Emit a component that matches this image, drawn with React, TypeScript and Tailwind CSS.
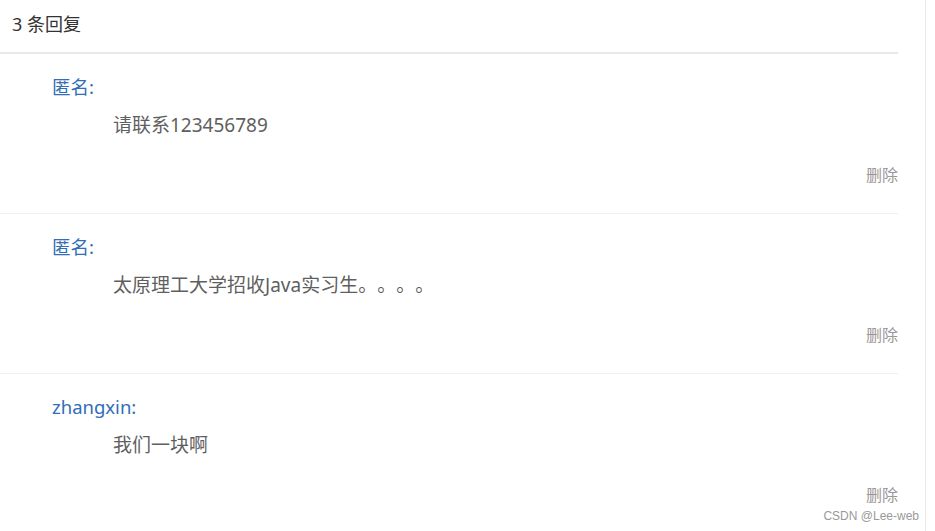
const replies = [
  { name: "匿名:", content: "请联系123456789" },
  { name: "匿名:", content: "太原理工大学招收Java实习生。。。。" },
  { name: "zhangxin:", content: "我们一块啊" },
];

export default function App() {
  return (
    <div
      className="relative h-[531px] w-[935px] overflow-hidden bg-white [text-spacing-trim:space-all]"
      style={{ fontFamily: '"Noto Sans", "Noto Sans CJK SC", sans-serif' }}
    >
      <div className="h-full w-[926px] border-r border-[#e8e8e8]">
        <div className="mr-[27px] border-b-2 border-[#e9e9e9] pb-[16px] pl-[12px] pt-[12px] text-[18px] leading-[24px] text-[#333]">
          3 条回复
        </div>
        {replies.map((reply, i) => (
          <div
            key={i}
            className="mr-[27px] flex flex-col border-b border-[#f0f0f0] pb-[26px] pt-[21px]"
          >
            <div className="pl-[52px] text-[18.5px] leading-[24px] text-[#2f6eb8]">
              {reply.name}
            </div>
            <div className="mt-[14px] pl-[113px] text-[19px] leading-[24px] text-[#5f5f5f]">
              {reply.content}
            </div>
            <div className="mt-[26px] self-end text-[16px] leading-[24px] text-[#999]">
              删除
            </div>
          </div>
        ))}
      </div>
      <div
        className="absolute bottom-[8px] right-[16px] text-[12px] leading-[14px] text-[#999]"
        style={{ fontFamily: '"Liberation Sans", Arial, sans-serif' }}
      >
        CSDN @Lee-web
      </div>
    </div>
  );
}
